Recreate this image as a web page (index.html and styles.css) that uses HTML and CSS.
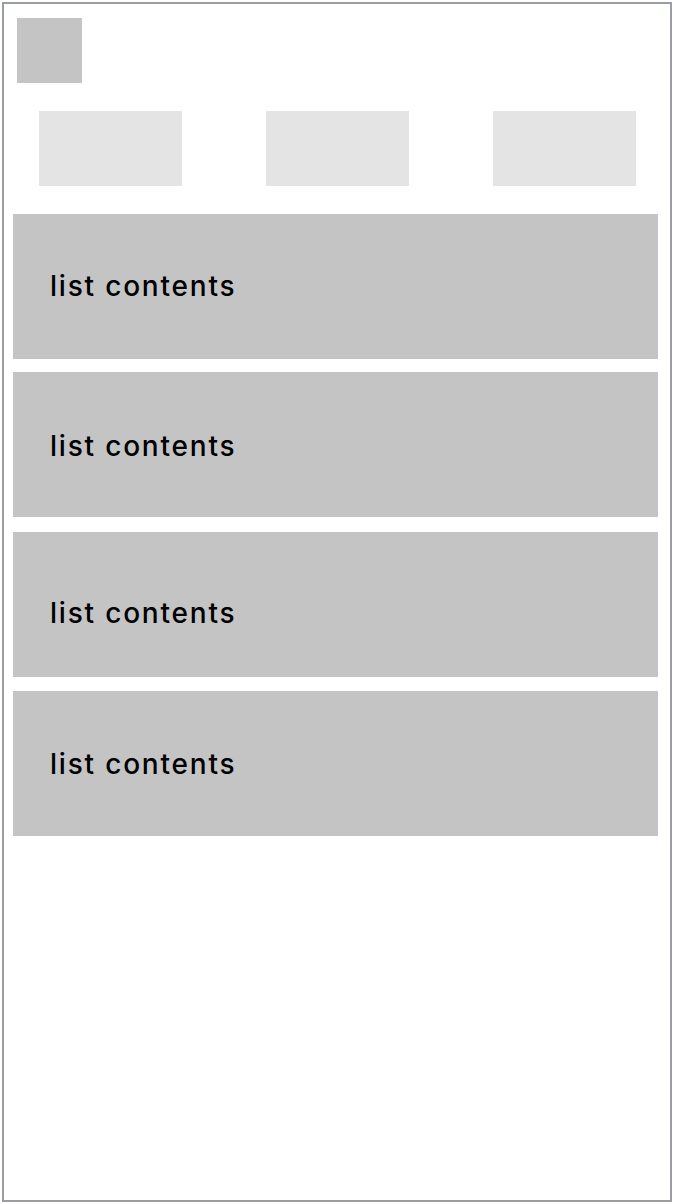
FILE: index.html
```html
<!DOCTYPE html>
<html lang="en">
<head>
<meta charset="utf-8">
<title>List wireframe</title>
<link rel="stylesheet" href="styles.css">
</head>
<body>
<div class="frame">
  <div class="logo"></div>
  <div class="tabs">
    <div class="tab"></div>
    <div class="tab"></div>
    <div class="tab"></div>
  </div>
  <div class="list">
    <div class="item item-1"><span class="label">list contents</span></div>
    <div class="item item-2"><span class="label">list contents</span></div>
    <div class="item item-3"><span class="label">list contents</span></div>
    <div class="item item-4"><span class="label">list contents</span></div>
  </div>
</div>
</body>
</html>
```
FILE: styles.css
```css
html, body {
  margin: 0;
  padding: 0;
  background: #ffffff;
}
body {
  font-family: Inter, "Liberation Sans", sans-serif;
}
.frame {
  box-sizing: border-box;
  margin: 2px 4px 2px 2px;
  height: 1200px;
  border: 2px solid #9a9ca6;
  background: #ffffff;
  display: flex;
  flex-direction: column;
}
.logo {
  width: 65px;
  height: 65px;
  margin: 14px 0 0 13px;
  background: #c4c4c4;
}
.tabs {
  display: flex;
  gap: 84px;
  margin: 28px 0 0 35px;
}
.tab {
  width: 143px;
  height: 75px;
  background: #e4e4e4;
}
.list {
  display: flex;
  flex-direction: column;
  margin: 28px 0 0 9px;
  width: 645px;
}
.item {
  box-sizing: border-box;
  height: 145px;
  background: #c4c4c4;
  padding-left: 37px;
  padding-top: 56px;
}
.item-2 { margin-top: 13px; padding-top: 58px; }
.item-3 { margin-top: 15px; padding-top: 65px; }
.item-4 { margin-top: 14px; padding-top: 57px; }
.label {
  display: block;
  font-size: 28px;
  font-weight: 500;
  letter-spacing: 1.8px;
  line-height: 32px;
  color: #000000;
}
```
